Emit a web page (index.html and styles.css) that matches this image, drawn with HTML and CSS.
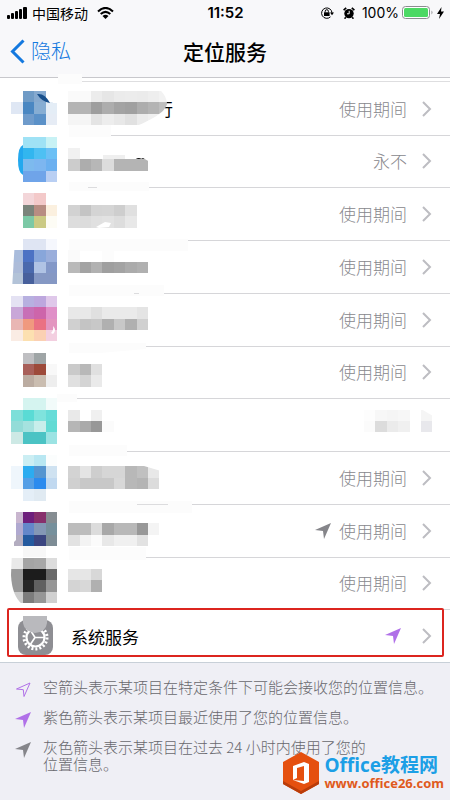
FILE: index.html
```html
<!DOCTYPE html>
<html lang="zh-CN">
<head>
<meta charset="utf-8">
<meta name="viewport" content="width=device-width, initial-scale=1">
<title>定位服务</title>
<link rel="stylesheet" href="styles.css">
</head>
<body>
<svg width="0" height="0" class="defs" aria-hidden="true">
  <symbol id="chevron" viewBox="0 0 10 16"><path d="M1 1l7 7-7 7" fill="none" stroke="currentColor" stroke-width="2"/></symbol>
  <symbol id="arrow" viewBox="0 0 16 16"><path d="M16 0L9 16 8 8 0 7Z" fill="currentColor"/></symbol>
  <symbol id="arrow-open" viewBox="0 0 16 16"><path d="M15 1L9 14.500 8.300 7.700 1.500 7Z" fill="none" stroke="currentColor" stroke-width="1"/></symbol>
</svg>

<header class="top">
  <div class="status">
    <div class="status-left">
      <svg class="signal" viewBox="0 0 20 12" aria-label="信号"><rect x="0" y="8" width="3" height="4" rx="1"/><rect x="4" y="6" width="3" height="6" rx="1"/><rect x="8" y="4" width="3" height="8" rx="1"/><rect x="12" y="2" width="3" height="10" rx="1"/><rect x="16" y="0" width="4" height="12" rx="1"/></svg>
      <span>中国移动</span>
      <svg class="wifi" viewBox="0 0 17 12" aria-label="无线网络"><path d="M1 4.400Q8.500-2.600 16 4.400M3.700 7.100Q8.500 2.600 13.300 7.100" fill="none" stroke="#000" stroke-width="2"/><path d="M5.500 9Q8.500 6.400 11.500 9L8.500 12Z"/></svg>
    </div>
    <time class="clock">11:52</time>
    <div class="status-right">
      <svg class="lock" viewBox="0 0 14 14" aria-label="方向锁定"><path d="M10.500 10.800A5.200 5.200 0 1 1 12 7" fill="none" stroke="#000" stroke-width="1"/><path d="M10 6.500h4l-2 2.700Z"/><rect x="4" y="6.300" width="5.600" height="3.700"/><path d="M5.200 6.500V5.300a1.600 1.600 0 0 1 3.200 0V6.500" fill="none" stroke="#000"/></svg>
      <svg class="alarm" viewBox="0 0 12 12" aria-label="闹钟"><circle cx="6" cy="6.600" r="4.700"/><path d="M.6 3.200L3.200.8M11.400 3.200L8.800.8M2.800 10.200L1.600 11.700M9.200 10.200l1.200 1.500" stroke="#000" stroke-width="1.600"/><path d="M6.200 3.800v3H4" fill="none" stroke="#fff"/></svg>
      <span>100%</span>
      <svg class="battery" viewBox="0 0 32 14" aria-label="电池"><rect x=".5" y=".5" width="27" height="12" rx="3" fill="#fff" stroke="#8c8c90"/><rect x="2" y="2" width="24" height="9" rx="1.500" fill="#4cd964"/><path d="M29.500 4.500q2 2 0 4Z" fill="#8c8c90"/></svg>
      <svg class="bolt" viewBox="0 0 7 12" aria-label="充电"><path d="M4.500 0L0 7h3L2 12l5-7.400H4Z"/></svg>
    </div>
  </div>
  <nav class="nav">
    <a class="back" href="#"><svg viewBox="0 0 15 25" aria-hidden="true"><path d="M13.500 1.500L2.500 12.500l11 11" fill="none" stroke="currentColor" stroke-width="3"/></svg>隐私</a>
    <h1>定位服务</h1>
  </nav>
</header>

<main>
  <div class="strip"></div>
  <ul class="list">
    <li><a class="row" href="#">
      <svg class="mosaic" viewBox="0 82 190 53" aria-hidden="true">
        <clipPath id="c1"><path d="M17 82H150C163 90 167 98 167 104C165 113 150 120 137 126H0Z"/></clipPath>
        <path class="smudge" d="M58 74H82V84H58ZM69 125H111V137H69Z"/><text x="156" y="116" class="name">行</text>
        <path d="M150 96H165V120H150Z" fill="#fff"/>
        <g clip-path="url(#c1)" data-cells="8,2:6f9bc6 85a9cf;9,1:dfe7f4 4a87c2 86add3 e4edf6;10,2:6f9bcb 5b91c8 e6ecf5;8,6:fa fa ec e6 eb ec eb ee f2;9,6:b4 b4 9e ad a3 a0 ad b4 be;10,6:f5 f5 e4 ed e8 e1 ec f0"></g>
        <path d="M46 91H58V103H53Q50 95 46 93Z" fill="#fff"/><path d="M37 94q8-1 13 9-8-1-13-9Z" fill="#174f8c"/>
      </svg>
      <span class="value">使用期间</span><svg class="chevron"><use href="#chevron"/></svg></a></li>
    <li><a class="row" href="#">
      <svg class="mosaic" viewBox="0 135 190 52" aria-hidden="true">
        <path class="smudge" d="M69 182H149V191H69Z"/><path d="M88 187.500h9" class="hair"/><path d="M23 145q-5 2-5 15t5 15Z" fill="#23a8ee"/><path d="M136 160q3-2 5 0M141 160q5-3 6 3" class="ink"/>
        <g data-cells="12,2:9fe2f5 9fe2f5 c8f2f5;13,2:32b6ef 4ec0f3 6cc0f5;14,2:7dbaee 7db6f0 6bb0f0;15,2:6fa4e9 6fa4e9 b9cff3;13,6:f1;14,6:cc ad b7 dc b4 b4 b4"></g>
        <path d="M103 155h22v4h-22Z" fill="#efefef"/><path d="M143 158h7v4Z" fill="#fff"/>
      </svg>
      <span class="value">永不</span><svg class="chevron"><use href="#chevron"/></svg></a></li>
    <li><a class="row" href="#">
      <svg class="mosaic" viewBox="0 187 190 53" aria-hidden="true">
        <path class="smudge" d="M69 239H188V251H69Z"/>
        <g data-cells="17,2:f3d6d9 f3c9c9;18,2:7a847b b88d82 fbf0df;19,2:7cc9a6 cbca84 fdfcf5;18,6:d2 c4 d4 d5 ce e0;19,6:dd dc e0 e2 dd e8"></g>
        <path d="M96 227l9-5 6 1-2 4-10 1Z" fill="#fff"/>
      </svg>
      <span class="value">使用期间</span><svg class="chevron"><use href="#chevron"/></svg></a></li>
    <li><a class="row" href="#">
      <svg class="mosaic" viewBox="0 240 190 53" aria-hidden="true">
        <path class="smudge" d="M69 285H164V296H69Z"/><path d="M134 293.500h5" class="hair"/>
        <clipPath id="c4"><path d="M15 239H190V290H12Z"/></clipPath>
        <g clip-path="url(#c4)" data-cells="21,2:dfe5f3 dfe5f3 f5f7fd;22,1:a9bcdc 4c72c4 88a6da 9aaedb;23,1:adbcd9 4a69ad b0c3e4 8398c8;24,1:b3c3d8 47609c 8598c4 8598c4;22,6:fa - - fc;23,6:b9 a3 b1 9f a3 ab b0"></g>
      </svg>
      <span class="value">使用期间</span><svg class="chevron"><use href="#chevron"/></svg></a></li>
    <li><a class="row" href="#">
      <svg class="mosaic" viewBox="0 293 190 53" aria-hidden="true">
        <path class="smudge" d="M69 343H146V349L100 353H69Z"/>
        <g data-cells="26,1:e4e2f3 b7b0e0 bda7de dfc8ea;27,1:c9a7d8 c86fb6 cd65aa e090c8;28,1:e9b6b4 f0997f ea7183 e396c0;29,1:faece4 fce0b0 fbd0b3 f3cfe0;27,6:e8 e8 e0 ea ea ea e4;28,6:d0 c4 c8 b0 c8 b0 d0"></g>
        <path d="M53 326q4 4 0 8l-2-1q3-3 2-7Z" fill="#fff"/>
      </svg>
      <span class="value">使用期间</span><svg class="chevron"><use href="#chevron"/></svg></a></li>
    <li><a class="row" href="#">
      <svg class="mosaic" viewBox="0 346 190 52" aria-hidden="true">
        <path class="smudge" d="M57 394H77V402H57Z"/>
        <g data-cells="31,2:bfbfc2 9fa5a6;32,2:a85f59 9d4a3a f8;33,2:bbaca1 cabdb0 ee;32,6:ca b8 e0;33,6:e0 d4 ea"></g>
      </svg>
      <span class="value">使用期间</span><svg class="chevron"><use href="#chevron"/></svg></a></li>
    <li><a class="row" href="#">
      <svg class="mosaic" viewBox="0 398 190 53" aria-hidden="true">
        <path class="smudge" d="M69 445H127V456H69Z"/>
        <g data-cells="35,2:d5f4f0 d5f4f0 f2fbfa;36,1:7ddfd9 5adbd5 7fe3dd 66dcd8;37,1:93dcd8 a5e2df c8eeeb 62dbd4;38,1:cde9e5 4bc3c4 4bc3c4 9be3e3;36,6:e9 - f0;37,6:b6 aa 98 fb"></g>
      </svg>
      <svg class="mosaic-value" viewBox="364 398 72 53" aria-hidden="true"><g data-cells="36,32:fd f7 f5 f7;36,37:f5;37,32:fb dc eb f0;37,37:e8e8ec"></g><path d="M421 409h12v7Z" fill="#fff"/></svg></a></li>
    <li><a class="row" href="#">
      <svg class="mosaic" viewBox="0 451 190 53" aria-hidden="true">
        <path class="smudge" d="M69 501H192V513H69Z"/><path d="M137 504.500h31" class="hair"/>
        <g data-cells="40,2:cbeef3 b8e7f2 fbfdfd;41,1:eff6fc 2cacf0 5595d0 cfe2f1;42,1:eff6fc 559fe6 2c8bee c1d9f0;43,2:e4eef7 e0eaf2;41,6:d3 e4 ce d6 d6 b8 c0 e8;42,6:d0 c8 c8 c8 d8 b8 b4 dc"></g>
        <path d="M144 466h17v5Z" fill="#fff"/>
      </svg>
      <span class="value">使用期间</span><svg class="chevron"><use href="#chevron"/></svg></a></li>
    <li><a class="row" href="#">
      <svg class="mosaic" viewBox="0 504 190 53" aria-hidden="true">
        <path class="smudge" d="M69 547H146V560H69Z"/>
        <clipPath id="c9"><path d="M16 504H190V557H14V542L16 540Z"/></clipPath>
        <g clip-path="url(#c9)" data-cells="45,1:c9b6cf 6e1f7c 87306c 868d92;46,1:b0a9d0 6487ca 8497b5 76909c;47,1:b3adc0 245a9f 3b4580 7d8c95;48,2:f7 f7;46,6:bc bc dc a8 b8 b8 98 f4;47,6:e2 f3 fb e8 f0 f0 e2"></g>
      </svg>
      <svg class="arrow gray"><use href="#arrow"/></svg><span class="value">使用期间</span><svg class="chevron"><use href="#chevron"/></svg></a></li>
    <li><a class="row" href="#">
      <svg class="mosaic" viewBox="0 557 190 52" aria-hidden="true">
        <clipPath id="c10"><path d="M12 550H190V604H22Q12 596 11 575Z"/></clipPath>
        <g clip-path="url(#c10)" data-cells="49,1:e9 a4 a7 dc;50,1:9a 1c 1c 6a;51,1:99 26 60 96;52,1:cc 7c 96 d0;50,6:e6 e6 d8;51,6:d4 d8 b0"></g>
      </svg>
      <span class="value">使用期间</span><svg class="chevron"><use href="#chevron"/></svg></a></li>
    <li><a class="row system" href="#">
      <svg class="gear" viewBox="0 0 35 39" aria-hidden="true">
        <rect y="4" width="35" height="35" rx="8" fill="#8e8e93"/>
        <g fill="none" stroke="#fff"><circle cx="17.500" cy="21.500" r="9" stroke-width="2.200"/><circle cx="17.500" cy="21.500" r="11.500" stroke-width="3" stroke-dasharray="2 2.015"/><path d="M17 21.500L12 13.500M17 21.500H27M17 21.500L12 29" stroke-width="1.600"/></g>
        <path d="M5 0H29V7Q28 16 17 17 6 15 5 7Z" fill="#b9b9bd"/>
      </svg>
      <span class="label">系统服务</span>
      <svg class="arrow purple"><use href="#arrow"/></svg><svg class="chevron"><use href="#chevron"/></svg></a></li>
  </ul>
</main>

<footer class="legend">
  <p><svg class="purple"><use href="#arrow-open"/></svg><span>空箭头表示某项目在特定条件下可能会接收您的位置信息。</span></p>
  <p><svg class="purple"><use href="#arrow"/></svg><span>紫色箭头表示某项目最近使用了您的位置信息。</span></p>
  <p><svg class="gray"><use href="#arrow"/></svg><span>灰色箭头表示某项目在过去 24 小时内使用了您的<br>位置信息。</span></p>
  <div class="brand">
    <svg viewBox="0 0 36 42" aria-hidden="true"><path d="M18 0L36 10V32L18 42 0 32V10Z" fill="#e5500f"/><path d="M0 32L18 42 36 32V29L18 39 0 29Z" fill="#b93c0a"/><path d="M10 14L21 10 26 12V30L21 32 10 28 21 29V14L14 16V26L10 28Z" fill="#fff"/></svg>
    <div><strong>Office教程网</strong><b>www.office26.com</b></div>
  </div>
</footer>
<script src="mosaic.js"></script>
</body>
</html>
```
FILE: styles.css
```css
* { box-sizing: border-box; }
body {
  margin: 0;
  min-height: 100vh;
  display: flex;
  flex-direction: column;
  background: #efeff5;
  color: #000;
  font-family: "Noto Sans CJK SC", sans-serif;
}
a { color: inherit; text-decoration: none; }
.defs { position: absolute; }
.top {
  height: 78px;
  background: #f8f8fa;
  border-bottom: 1px solid #c8c8cc;
}
.status {
  display: grid;
  grid-template-columns: 1fr auto 1fr;
  align-items: center;
  height: 26px;
  padding: 0 6px 0 7px;
  font-size: 14px;
  line-height: 20px;
}
.status-left, .status-right { display: flex; align-items: center; }
.status-left { gap: 5px; }
.status-right { justify-content: flex-end; gap: 3px; font-family: Inter, sans-serif; }
.signal { width: 20px; height: 12px; }
.wifi { width: 17px; height: 12px; margin-left: 4px; }
.clock { font: 600 15px/20px Inter, sans-serif; }
.lock { width: 14px; height: 14px; margin-right: 6px; }
.alarm { width: 12px; height: 12px; margin-right: 4px; }
.battery { width: 32px; height: 14px; }
.bolt { width: 7px; height: 12px; }
.nav {
  display: grid;
  grid-template-columns: 1fr auto 1fr;
  align-items: center;
  height: 50px;
  padding: 0 10px;
}
.back { display: flex; align-items: center; gap: 6px; color: #1479df; font-size: 20px; font-weight: 300; line-height: 28px; }
.back svg { width: 15px; height: 25px; }
h1 { margin: 0; font-size: 21px; font-weight: 500; line-height: 28px; }
main { background: #fff; border-bottom: 1px solid #c8d0d8; }
.strip { height: 4px; margin-left: 82px; border-bottom: 1px solid #dedee0; }
.list { margin: 0; padding: 0; list-style: none; }
.row {
  position: relative;
  display: flex;
  align-items: center;
  height: 53px;
  padding-right: 18px;
  font-size: 17px;
  line-height: 24px;
}
li:nth-child(4n+2) .row { height: 52px; }
.row::after {
  content: "";
  position: absolute;
  left: 69px;
  right: 0;
  bottom: -1px;
  height: 1px;
  background: #d6d6d9;
}
.mosaic { position: relative; z-index: 1; width: 190px; height: 100%; margin-right: auto; overflow: visible; }
.mosaic-value { width: 72px; height: 100%; margin-right: -4px; }
.smudge { fill: #fcfcfc; }
.hair { stroke: #dcdcde; }
.ink { fill: none; stroke: #111; stroke-width: 2; }
.name { font-size: 17px; }
.value { color: #88888d; font-weight: 300; }
.chevron { width: 10px; height: 16px; margin-left: 15px; color: #bdbdc2; }
.arrow { width: 16px; height: 16px; margin-right: 8px; }
.gray { color: #85858a; }
.purple { color: #b070e8; }
.system { padding-left: 18px; }
.row.system::after {
  left: 7px;
  right: 6px;
  top: -1px;
  bottom: 5px;
  height: auto;
  background: none;
  border: 2px solid #dc251f;
  border-radius: 2px;
}
.gear { width: 35px; height: 39px; }
.label { margin: 2px auto 0 18px; }
.system .arrow { margin-right: 6px; }
.legend { position: relative; flex: 1; padding: 15px 8px 0 15px; color: #68686d; font-size: 15px; line-height: 17px; }
.legend p { display: flex; gap: 12px; margin: 0 0 10px; }
.legend p > svg { flex: none; width: 16px; height: 16px; margin-top: 4px; }
.legend span { font-weight: 300; white-space: nowrap; }
.brand { position: absolute; right: 6px; bottom: 6px; display: flex; align-items: center; gap: 5px; }
.brand svg { width: 36px; height: 42px; }
.brand strong, .brand b { display: block; font-family: "Open Sans", "Noto Sans CJK SC", sans-serif; font-weight: 700; }
.brand strong { color: #1c9fe6; font-size: 19px; line-height: 20px; }
.brand b { color: #e05a1c; font-size: 13px; line-height: 16px; }
```
FILE: mosaic.js
```js
// Fills each group with blurred-out blocks: "row,col:color color;..." (two digits = gray level, "-" = gap).
const CELL = 1024 / 90;
document.querySelectorAll("[data-cells]").forEach((group) => {
  group.dataset.cells.split(";").forEach((run) => {
    const [at, colors] = run.split(":");
    const [row, col] = at.split(",").map(Number);
    colors.split(" ").forEach((color, i) => {
      if (color === "-") return;
      const rect = document.createElementNS("http://www.w3.org/2000/svg", "rect");
      const x = Math.round((col + i) * CELL);
      const y = Math.round(row * CELL);
      rect.setAttribute("x", x);
      rect.setAttribute("y", y);
      rect.setAttribute("width", Math.round((col + i + 1) * CELL) - x);
      rect.setAttribute("height", Math.round((row + 1) * CELL) - y);
      rect.setAttribute("fill", "#" + (color.length === 2 ? color.repeat(3) : color));
      group.appendChild(rect);
    });
  });
});
```
